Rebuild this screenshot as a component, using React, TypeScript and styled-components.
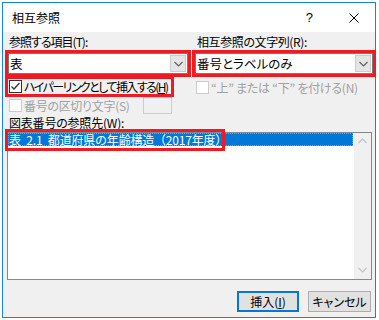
import React from 'react';
import styled, { createGlobalStyle } from 'styled-components';

const Global = createGlobalStyle`
  html, body { margin: 0; padding: 0; background: #ffffff; }
  body {
    width: 379px; height: 320px; overflow: hidden;
    font-family: "Noto Sans CJK JP", "Noto Sans", sans-serif;
    font-size: 12px; color: #000;
  }
`;

const Desk = styled.div`
  width: 379px; height: 320px; box-sizing: border-box;
  padding: 2px 0 0 2px; background: #ffffff;
`;

const Window = styled.div`
  width: 374px; height: 316px; box-sizing: border-box;
  border: 1px solid #1883d7;
  display: flex; flex-direction: column;
  background: #f0f0f0;
`;

const TitleBar = styled.div`
  height: 29px; flex: none; background: #ffffff;
  display: flex; align-items: center;
  padding: 0 16px 0 9px;
  font-size: 12px; line-height: 14px;
`;

const Title = styled.div`
  flex: 1;
`;

const Help = styled.div`
  font-family: "Liberation Sans", sans-serif; font-size: 13px;
  margin-right: 36px;
`;

const Body = styled.div`
  flex: 1; display: flex; flex-direction: column;
  padding: 3px 2px 0 5px;
  font-feature-settings: "palt" 1;
`;

const Top = styled.div`
  display: grid; grid-template-columns: 180px 178px; column-gap: 7px;
`;

const Column = styled.div`
  display: flex; flex-direction: column;
`;

const Label = styled.div<{ $indent?: number; $ls?: number }>`
  line-height: 14px; height: 14px; padding-left: ${p => p.$indent ?? 1}px;
  letter-spacing: ${p => p.$ls ?? 0}px;
  white-space: nowrap;
`;

const Combo = styled.div`
  margin-top: 4px; height: 21px; box-sizing: border-box;
  border: 1px solid #7a7a7a; background: #ffffff;
  display: flex; align-items: stretch;
  outline: 3px solid #ed1c24;
`;

const ComboText = styled.div`
  flex: 1; padding-left: 1px; line-height: 19px; font-size: 12.5px;
  white-space: nowrap;
`;

const DropButton = styled.div`
  width: 16px; box-sizing: border-box; margin: 1px;
  background: #e5e5e5; border: 1px solid #cccccc;
  display: flex; align-items: center; justify-content: center;
`;

const CheckRow = styled.div<{ $mark?: boolean; $top?: number; $indent?: number }>`
  margin-top: ${p => p.$top ?? 5}px;
  height: 15px; display: flex; align-items: center; gap: 2px;
  padding-left: ${p => p.$indent ?? 1}px; padding-right: 3px;
  align-self: flex-start;
  white-space: nowrap;
  ${p => p.$mark ? 'outline: 3px solid #ed1c24;' : ''}
`;

const SepRow = styled.div`
  margin-top: 3px; height: 17px; display: flex; align-items: center; gap: 2px;
  padding-left: 1px; white-space: nowrap;
`;

const Box = styled.div<{ $disabled?: boolean }>`
  width: 13px; height: 13px; box-sizing: border-box; flex: none;
  border: 1px solid ${p => p.$disabled ? '#cccccc' : '#333333'};
  background: #ffffff;
  display: flex; align-items: center; justify-content: center;
`;

const Text = styled.span<{ $disabled?: boolean; $ls?: number }>`
  color: ${p => p.$disabled ? '#a0a0a0' : '#000000'};
  letter-spacing: ${p => p.$ls ?? 0}px;
  line-height: 14px;
`;

const Key = styled.span`
  text-decoration: underline; text-underline-offset: 1px;
`;

const SmallInput = styled.div`
  margin-left: auto; margin-right: 16px;
  width: 29px; height: 17px; box-sizing: border-box;
  border: 1px solid #cccccc; background: #f0f0f0;
`;

const ListLabel = styled.div`
  margin-top: 2px; line-height: 14px; height: 14px; padding-left: 1px;
  letter-spacing: -0.2px;
`;

const ListBox = styled.div`
  margin: 2px 0 0 -1px; width: 365px; height: 148px; box-sizing: border-box;
  border: 1px solid #828790; background: #ffffff;
  display: flex; position: relative;
`;

const Items = styled.div`
  width: 345px; margin-right: 1px;
`;

const Item = styled.div<{ $selected?: boolean }>`
  height: 13px; box-sizing: border-box;
  background: ${p => p.$selected ? '#0078d7' : 'transparent'};
  color: ${p => p.$selected ? '#ffffff' : '#000000'};
  border: 1px dotted ${p => p.$selected ? '#ff8728' : 'transparent'};
  font-feature-settings: normal;
  line-height: 11px; padding-left: 0px; white-space: nowrap;
  font-size: 12px; word-spacing: 3px; letter-spacing: -0.2px;
`;

const Mark = styled.div`
  position: absolute; left: -3px; top: -4px;
  width: 220px; height: 22px; box-sizing: border-box;
  border: 3px solid #ed1c24; pointer-events: none;
`;

const ScrollBar = styled.div`
  width: 17px; background: #f0f0f0;
  display: flex; flex-direction: column; justify-content: space-between;
  align-items: center; padding: 5px 0 6px;
  box-sizing: border-box;
`;

const Buttons = styled.div`
  margin-top: 11px; display: flex; justify-content: flex-end; gap: 9px;
  padding-right: 2px;
`;

const Button = styled.div<{ $default?: boolean }>`
  width: ${p => p.$default ? 62 : 63}px; height: 21px; box-sizing: border-box;
  background: #e1e1e1;
  border: ${p => p.$default ? '2px solid #0078d7' : '1px solid #adadad'};
  display: flex; align-items: center; justify-content: center;
  line-height: 14px; white-space: nowrap;
`;

const Chevron = ({ up, color = '#606060' }: { up?: boolean; color?: string }) => (
  <svg width="9" height="6" viewBox="0 0 9 6">
    <polyline
      points={up ? '0.5,5 4.5,1 8.5,5' : '0.5,1 4.5,5 8.5,1'}
      fill="none" stroke={color} strokeWidth="1.2"
    />
  </svg>
);

const Close = () => (
  <svg width="10" height="10" viewBox="0 0 10 10">
    <path d="M0.5 0.5 L9.5 9.5 M9.5 0.5 L0.5 9.5" stroke="#000" strokeWidth="1" fill="none" />
  </svg>
);

const Check = () => (
  <svg width="11" height="11" viewBox="0 0 11 11">
    <polyline points="1.5,5.5 4,8 9.5,2" fill="none" stroke="#333" strokeWidth="1.3" />
  </svg>
);

export default function App() {
  return (
    <Desk>
      <Global />
      <Window>
        <TitleBar>
          <Title>相互参照</Title>
          <Help>?</Help>
          <Close />
        </TitleBar>
        <Body>
          <Top>
            <Column>
              <Label $ls={-1}>参照する項目(T):</Label>
              <Combo>
                <ComboText>表</ComboText>
                <DropButton><Chevron /></DropButton>
              </Combo>
              <CheckRow $mark>
                <Box><Check /></Box>
                <Text $ls={-1.55}>ハイパーリンクとして挿入する(<Key>H</Key>)</Text>
              </CheckRow>
              <SepRow>
                <Box $disabled />
                <Text $disabled $ls={-0.3}>番号の区切り文字(S)</Text>
                <SmallInput />
              </SepRow>
            </Column>
            <Column>
              <Label $indent={2} $ls={-0.4}>相互参照の文字列(R):</Label>
              <Combo>
                <ComboText>番号とラベルのみ</ComboText>
                <DropButton><Chevron /></DropButton>
              </Combo>
              <CheckRow $indent={1} $top={6}>
                <Box $disabled />
                <Text $disabled $ls={-0.25}>“上” または “下” を付ける(N)</Text>
              </CheckRow>
            </Column>
          </Top>
          <ListLabel>図表番号の参照先(W):</ListLabel>
          <ListBox>
            <Items>
              <Item $selected>表 2.1 都道府県の年齢構造（2017年度）</Item>
            </Items>
            <ScrollBar>
              <Chevron up color="#c2c2c2" />
              <Chevron color="#c2c2c2" />
            </ScrollBar>
            <Mark />
          </ListBox>
          <Buttons>
            <Button $default>挿入(<Key>I</Key>)</Button>
            <Button>キャンセル</Button>
          </Buttons>
        </Body>
      </Window>
    </Desk>
  );
}
